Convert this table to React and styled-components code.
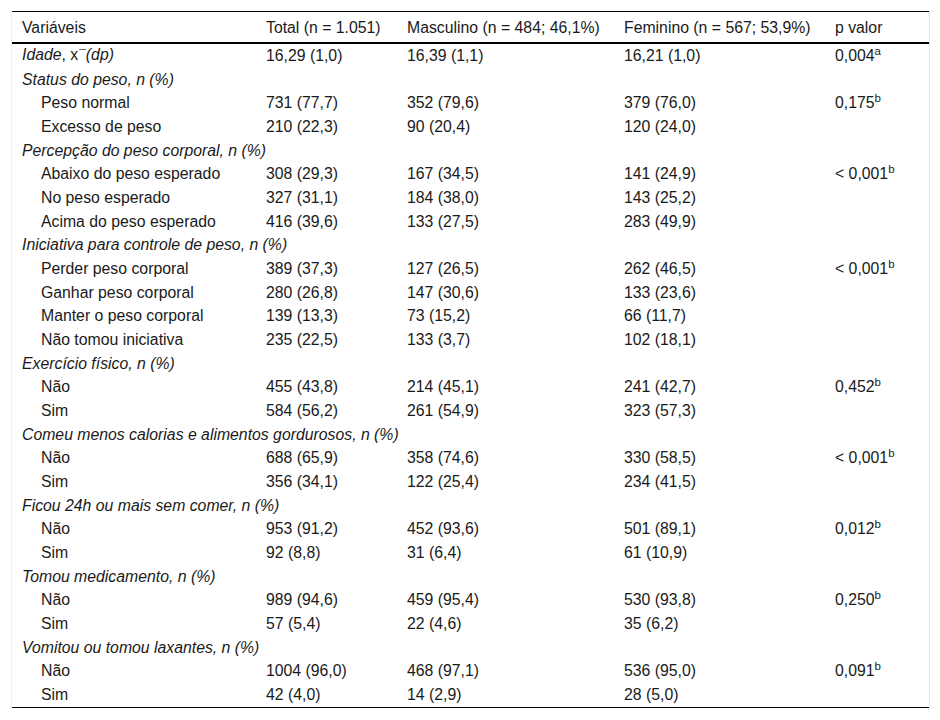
import React from 'react';
import styled, { createGlobalStyle } from 'styled-components';

const GlobalStyle = createGlobalStyle`
  body {
    margin: 0;
    background: #ffffff;
    font-family: "Liberation Sans", Arial, sans-serif;
  }
`;

const Frame = styled.div`
  margin: 11px 0 0 11px;
  width: 917px;
  border-right: 1px solid #e6e6e6;
  border-left: 1px solid #f0f0f0;
  padding-bottom: 1px;
`;

const Table = styled.table`
  width: 917px;
  border-collapse: collapse;
  table-layout: fixed;
  color: #1a1a1a;
  font-size: 15.8px;
  line-height: 18px;
  border-top: 1px solid #000;
  border-bottom: 1px solid #000;
`;

const HeadCell = styled.th`
  text-align: left;
  font-weight: 400;
  height: 28px;
  padding: 2px 0 0 10px;
  border-bottom: 2px solid #000;
  white-space: nowrap;
`;

const Cell = styled.td`
  height: 23.68px;
  padding: 0 0 0 ${p => (p.$indent ? 29 : 10)}px;
  font-style: ${p => (p.$italic ? 'italic' : 'normal')};
  white-space: nowrap;
  vertical-align: middle;
`;

const Sup = styled.sup`
  font-size: 11.5px;
  line-height: 0;
  vertical-align: 6px;
`;

const Macron = styled.span`
  font-size: 12px;
  display: inline-block;
  transform: translateY(-1px);
  margin-left: 1px;
`;

const groups = [
  {
    title: 'Status do peso, n (%)',
    rows: [
      ['Peso normal', '731 (77,7)', '352 (79,6)', '379 (76,0)', '0,175', 'b'],
      ['Excesso de peso', '210 (22,3)', '90 (20,4)', '120 (24,0)'],
    ],
  },
  {
    title: 'Percepção do peso corporal, n (%)',
    rows: [
      ['Abaixo do peso esperado', '308 (29,3)', '167 (34,5)', '141 (24,9)', '< 0,001', 'b'],
      ['No peso esperado', '327 (31,1)', '184 (38,0)', '143 (25,2)'],
      ['Acima do peso esperado', '416 (39,6)', '133 (27,5)', '283 (49,9)'],
    ],
  },
  {
    title: 'Iniciativa para controle de peso, n (%)',
    rows: [
      ['Perder peso corporal', '389 (37,3)', '127 (26,5)', '262 (46,5)', '< 0,001', 'b'],
      ['Ganhar peso corporal', '280 (26,8)', '147 (30,6)', '133 (23,6)'],
      ['Manter o peso corporal', '139 (13,3)', '73 (15,2)', '66 (11,7)'],
      ['Não tomou iniciativa', '235 (22,5)', '133 (3,7)', '102 (18,1)'],
    ],
  },
  {
    title: 'Exercício físico, n (%)',
    rows: [
      ['Não', '455 (43,8)', '214 (45,1)', '241 (42,7)', '0,452', 'b'],
      ['Sim', '584 (56,2)', '261 (54,9)', '323 (57,3)'],
    ],
  },
  {
    title: 'Comeu menos calorias e alimentos gordurosos, n (%)',
    rows: [
      ['Não', '688 (65,9)', '358 (74,6)', '330 (58,5)', '< 0,001', 'b'],
      ['Sim', '356 (34,1)', '122 (25,4)', '234 (41,5)'],
    ],
  },
  {
    title: 'Ficou 24h ou mais sem comer, n (%)',
    rows: [
      ['Não', '953 (91,2)', '452 (93,6)', '501 (89,1)', '0,012', 'b'],
      ['Sim', '92 (8,8)', '31 (6,4)', '61 (10,9)'],
    ],
  },
  {
    title: 'Tomou medicamento, n (%)',
    rows: [
      ['Não', '989 (94,6)', '459 (95,4)', '530 (93,8)', '0,250', 'b'],
      ['Sim', '57 (5,4)', '22 (4,6)', '35 (6,2)'],
    ],
  },
  {
    title: 'Vomitou ou tomou laxantes, n (%)',
    rows: [
      ['Não', '1004 (96,0)', '468 (97,1)', '536 (95,0)', '0,091', 'b'],
      ['Sim', '42 (4,0)', '14 (2,9)', '28 (5,0)'],
    ],
  },
];

export default function App() {
  return (
    <>
      <GlobalStyle />
      <Frame>
        <Table>
          <colgroup>
            <col style={{ width: 244 }} />
            <col style={{ width: 141 }} />
            <col style={{ width: 217 }} />
            <col style={{ width: 211 }} />
            <col style={{ width: 104 }} />
          </colgroup>
          <thead>
            <tr>
              <HeadCell>Variáveis</HeadCell>
              <HeadCell>Total (n = 1.051)</HeadCell>
              <HeadCell>Masculino (n = 484; 46,1%)</HeadCell>
              <HeadCell>Feminino (n = 567; 53,9%)</HeadCell>
              <HeadCell>p valor</HeadCell>
            </tr>
          </thead>
          <tbody>
            <tr>
              <Cell><i>Idade</i>, x<Macron>¯</Macron><i>(dp)</i></Cell>
              <Cell>16,29 (1,0)</Cell>
              <Cell>16,39 (1,1)</Cell>
              <Cell>16,21 (1,0)</Cell>
              <Cell>0,004<Sup>a</Sup></Cell>
            </tr>
            {groups.map(g => (
              <React.Fragment key={g.title}>
                <tr>
                  <Cell $italic colSpan={5}>{g.title}</Cell>
                </tr>
                {g.rows.map(r => (
                  <tr key={g.title + r[0]}>
                    <Cell $indent>{r[0]}</Cell>
                    <Cell>{r[1]}</Cell>
                    <Cell>{r[2]}</Cell>
                    <Cell>{r[3]}</Cell>
                    <Cell>{r[4]}{r[5] && <Sup>{r[5]}</Sup>}</Cell>
                  </tr>
                ))}
              </React.Fragment>
            ))}
          </tbody>
        </Table>
      </Frame>
    </>
  );
}
